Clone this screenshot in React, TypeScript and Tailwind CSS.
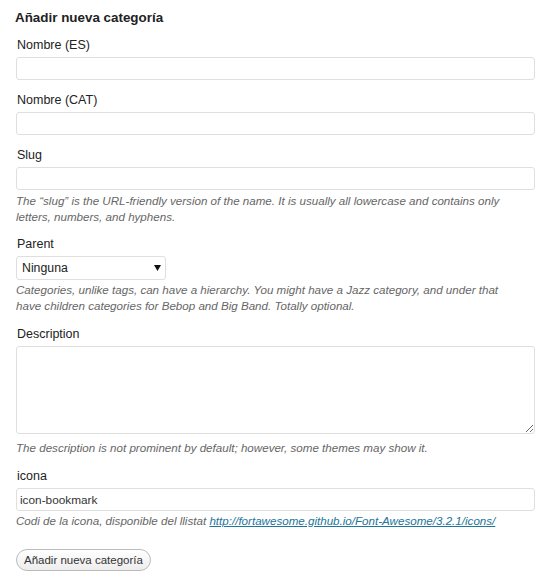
import { useState } from "react";

const font = { fontFamily: '"Liberation Sans", Arial, sans-serif' };

function Field({ label, children, className = "mb-[12px]" }: { label: string; children: React.ReactNode; className?: string }) {
  return (
    <div className={className}>
      <label className="block h-[17px] mb-[3px] pl-px text-[12.5px] leading-[17px] text-[#222]">{label}</label>
      {children}
    </div>
  );
}

function Help({ children, className = "" }: { children: React.ReactNode; className?: string }) {
  return <p className={`max-w-[500px] text-[11.6px] leading-[16px] italic text-[#666] ${className}`}>{children}</p>;
}

const inputCls =
  "block w-full h-[23px] rounded-[3px] border border-[#dfdfdf] bg-white px-[3px] text-[11.8px] text-[#333] outline-none";

export default function App() {
  const [icon, setIcon] = useState("icon-bookmark");

  return (
    <div className="min-h-[588px] bg-white px-4 pt-[9px]" style={font}>
      <h3 className="mb-[11px] h-[17px] text-[13.4px] font-bold leading-[17px] text-[#222] -ml-px">
        Añadir nueva categoría
      </h3>

      <Field label="Nombre (ES)">
        <input className={inputCls} />
      </Field>

      <Field label="Nombre (CAT)">
        <input className={inputCls} />
      </Field>

      <Field label="Slug" className="mb-[11px]">
        <input className={inputCls} />
        <Help className="mt-[3px]">
          The “slug” is the URL-friendly version of the name. It is usually all lowercase and contains only
          letters, numbers, and hyphens.
        </Help>
      </Field>

      <Field label="Parent">
        <div className="relative w-[150px]">
          <select className="block h-[24px] w-full appearance-none rounded-[3px] border border-[#dfdfdf] bg-white pl-[5px] text-[12.3px] text-[#222] outline-none">
            <option>Ninguna</option>
          </select>
          <svg className="pointer-events-none absolute right-[5px] top-[9px]" width="7" height="6" viewBox="0 0 7 6">
            <path d="M0 0h7L3.5 6z" fill="#111" />
          </svg>
        </div>
        <Help className="mt-[2px]">
          Categories, unlike tags, can have a hierarchy. You might have a Jazz category, and under that
          have children categories for Bebop and Big Band. Totally optional.
        </Help>
      </Field>

      <Field label="Description">
        <textarea className="block h-[88px] w-full rounded-[3px] border border-[#dfdfdf] bg-white p-[3px] text-[12px] outline-none" />
        <Help className="mt-[6px]">The description is not prominent by default; however, some themes may show it.</Help>
      </Field>

      <Field label="icona">
        <input className={inputCls} value={icon} onChange={(e) => setIcon(e.target.value)} />
        <Help className="mt-[2px]">
          Codi de la icona, disponible del llistat{" "}
          <a href="#" className="text-[#21759b] underline">
            http://fortawesome.github.io/Font-Awesome/3.2.1/icons/
          </a>
        </Help>
      </Field>

      <div className="pt-[6px]">
        <button className="h-[22px] rounded-full border border-[#bbb] bg-gradient-to-b from-white to-[#ededed] px-[7px] text-[11.5px] leading-[20px] text-[#333]">
          Añadir nueva categoría
        </button>
      </div>
    </div>
  );
}
